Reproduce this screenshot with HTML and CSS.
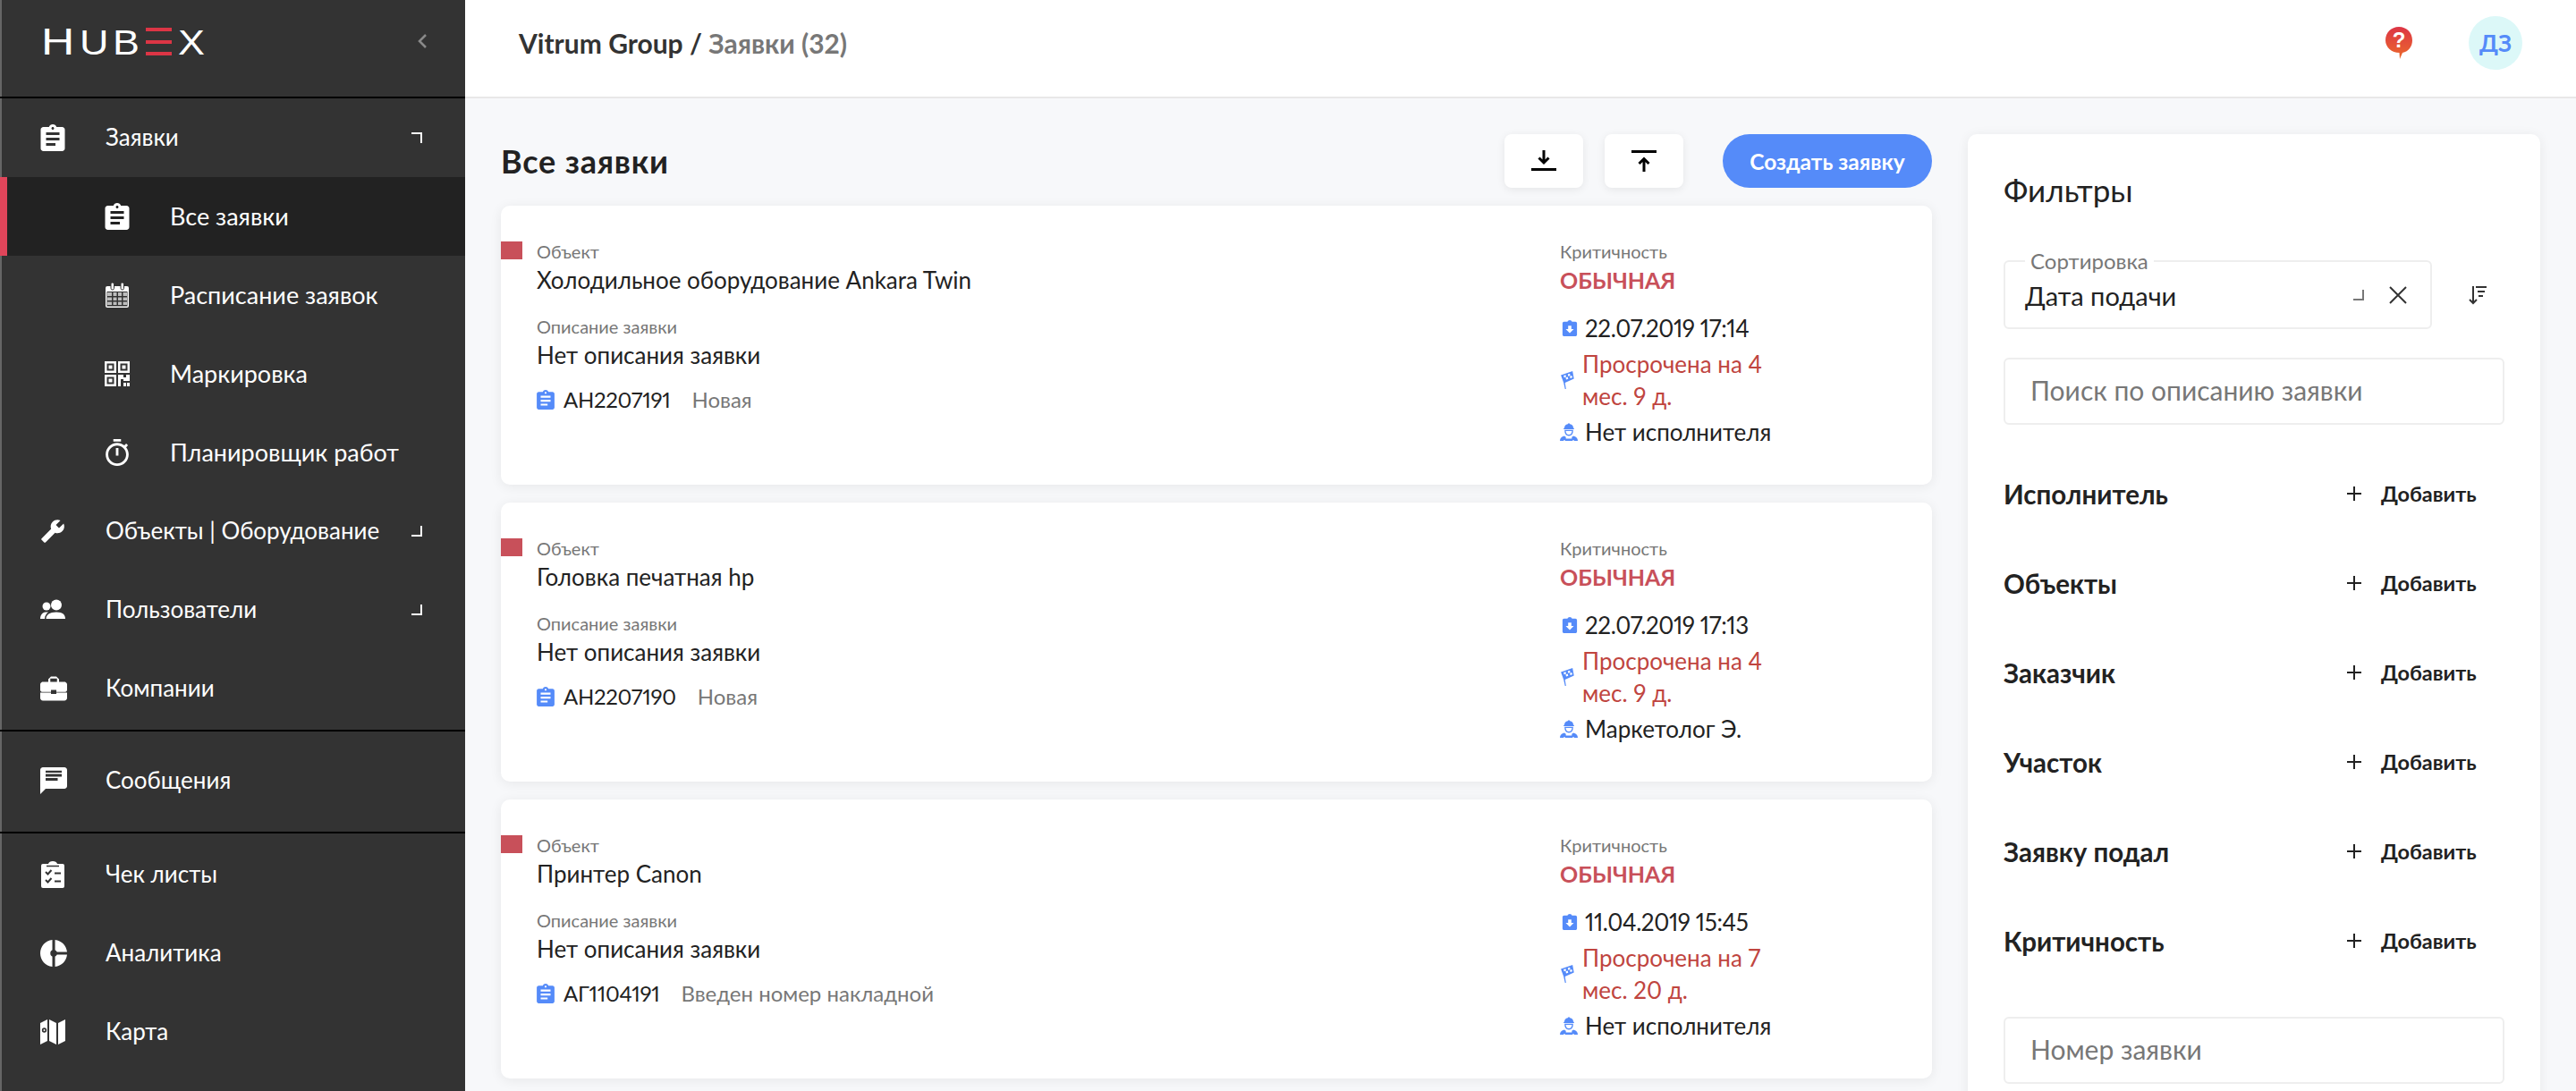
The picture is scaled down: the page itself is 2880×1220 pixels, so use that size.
FILE: index.html
```html
<!DOCTYPE html>
<html lang="ru">
<head>
  <meta charset="UTF-8">
  <title>Все заявки</title>
  <link rel="stylesheet" href="styles.css">
</head>
<body>
  <svg class="icon-defs" xmlns="http://www.w3.org/2000/svg">
    <symbol id="i-assignment" viewBox="3 1 18 20"><path d="M19 3h-4.18C14.4 1.84 13.3 1 12 1c-1.3 0-2.4.84-2.82 2H5c-1.1 0-2 .9-2 2v14c0 1.1.9 2 2 2h14c1.1 0 2-.9 2-2V5c0-1.1-.9-2-2-2zm-7 0c.55 0 1 .45 1 1s-.45 1-1 1-1-.45-1-1 .45-1 1-1zm2 14H7v-2h7v2zm3-4H7v-2h10v2zm0-4H7V7h10v2z"/></symbol>
    <symbol id="i-date" viewBox="3 1 18 20"><path d="M19 3h-4.18C14.4 1.84 13.3 1 12 1c-1.3 0-2.4.84-2.82 2H5c-1.1 0-2 .9-2 2v14c0 1.1.9 2 2 2h14c1.1 0 2-.9 2-2V5c0-1.1-.9-2-2-2zm-7 14l-5-5h3V8h4v4h3l-5 5z"/></symbol>
    <symbol id="i-flag" viewBox="0 0 20 26"><path d="M1 6l17-6 2 11-13 6 1.500 9H7L5 17z"/><path fill="#fff" d="M5 6.500l3-1 .7 3-3 1zM11 4.500l3-1 .7 3-3 1zM8 9.500l3-1 .7 3-3 1zM14 7.500l3-1 .7 3-3 1z"/></symbol>
    <symbol id="i-worker" viewBox="0 0 24 24"><path d="M12 0l1.500 1.500c3 .5 4.500 2.500 4.500 5.500h1v1.500H5V7h1c0-3 1.500-5 4.500-5.500z"/><path d="M7 10h10c0 4-2 6.500-5 6.500S7 14 7 10z" fill="none" stroke="currentColor" stroke-width="1.600"/><path d="M0 24c0-3.500 2-5.500 6-6.500l2 1.500v2h8v-2l2-1.500c4 1 6 3 6 6.500h-5v-1h-2v1H7v-1H5v1z"/></symbol>
  </svg>

  <div class="app">
    <aside class="sidebar">
      <div class="logo-row">
        <div class="logo"><span class="logo-h">H</span><span class="logo-u">U</span><span class="logo-b">B</span><span class="logo-e"><i></i><i></i><i></i></span><span class="logo-x">X</span></div>
        <svg class="collapse" viewBox="0 0 12 18"><path d="M10 2L3 9l7 7" fill="none" stroke="#8a8a8a" stroke-width="2.500"/></svg>
      </div>

      <nav class="nav-group nav-first">
        <a class="nav-item">
          <svg class="nav-icon" viewBox="0 0 28 30"><use href="#i-assignment"/></svg>
          <span>Заявки</span><b class="corner corner-up"></b>
        </a>
        <a class="nav-item nav-sub active">
          <svg class="nav-icon" viewBox="0 0 28 30"><use href="#i-assignment"/></svg>
          <span>Все заявки</span>
        </a>
        <a class="nav-item nav-sub">
          <svg class="nav-icon" viewBox="0 0 28 28">
            <path d="M3 4h22a2 2 0 0 1 2 2v20a2 2 0 0 1-2 2H3a2 2 0 0 1-2-2V6a2 2 0 0 1 2-2z"/>
            <path d="M2.500 10h23v16.500h-23z" fill="#333"/>
            <path d="M3 11h5v4H3zm6.500 0h4v4h-4zm5.500 0h4v4h-4zm5.500 0H25v4h-4.500zM3 16.500h5V20H3zm6.500 0h4V20h-4zm5.500 0h4V20h-4zm5.500 0H25V20h-4.500zM3 21.500h5V25H3zm6.500 0h4V25h-4zm5.500 0h4V25h-4zm5.500 0H25V25h-4.500z" fill="#bdbdbd"/>
            <rect x="7" y="0" width="3.500" height="8" rx="1.700" stroke="#333"/><rect x="18" y="0" width="3.500" height="8" rx="1.700" stroke="#333"/>
          </svg>
          <span>Расписание заявок</span>
        </a>
        <a class="nav-item nav-sub">
          <svg class="nav-icon" viewBox="0 0 28 28">
            <path fill-rule="evenodd" d="M0 0h13v13H0zM2.500 2.500v8h8v-8zM15 0h13v13H15zM17.500 2.500v8h8v-8zM0 15h13v13H0zM2.500 17.500v8h8v-8z"/>
            <path d="M4.500 4.500h4v4h-4zM19.500 4.500h4v4h-4zM4.500 19.500h4v4h-4zM15 15h6v3h3v-3h4v7h-7v-2h-3v8h-3zM21 24h3v4h-3zM25 24h3v4h-3z"/>
          </svg>
          <span>Маркировка</span>
        </a>
        <a class="nav-item nav-sub">
          <svg class="nav-icon" viewBox="3 1 18 21"><path d="M15 1H9v2h6V1zm-4 13h2V8h-2v6zm8.030-6.610l1.420-1.420c-.43-.51-.9-.99-1.410-1.410l-1.420 1.420C16.070 4.740 14.120 4 12 4c-4.970 0-9 4.030-9 9s4.020 9 9 9 9-4.030 9-9c0-2.120-.74-4.070-1.970-5.610zM12 20c-3.870 0-7-3.130-7-7s3.130-7 7-7 7 3.130 7 7-3.130 7-7 7z"/></svg>
          <span>Планировщик работ</span>
        </a>
        <a class="nav-item">
          <svg class="nav-icon" viewBox="0 0 24 24"><path transform="matrix(-1 0 0 1 24 0)" d="M22.700 19l-9.100-9.100c.9-2.300.4-5-1.500-6.900-2-2-5-2.400-7.400-1.300L9 6 6 9 1.600 4.700C.4 7.100.9 10.100 2.900 12.100c1.900 1.900 4.600 2.400 6.900 1.500l9.100 9.100c.4.4 1 .4 1.400 0l2.300-2.300c.5-.4.5-1.100.1-1.400z"/></svg>
          <span>Объекты | Оборудование</span><b class="corner"></b>
        </a>
        <a class="nav-item">
          <svg class="nav-icon" viewBox="0 0 28 24">
            <circle cx="7" cy="8" r="4.500"/><circle cx="18" cy="6.500" r="6"/>
            <path d="M0 22c0-4 2-7 6-7.500h3c-2.500 2-4 4.500-4 7.500zM6.500 22c0-4.500 4-7.500 11.500-7.500S28 17.500 28 22z"/>
          </svg>
          <span>Пользователи</span><b class="corner"></b>
        </a>
        <a class="nav-item">
          <svg class="nav-icon nav-icon-wide" viewBox="2 3 20 18"><path d="M10 16v-1H2.010L2 19c0 1.110.89 2 2 2h16c1.110 0 2-.89 2-2v-4h-8v1h-4zm10-9h-4.010V5l-2-2h-4l-2 2v2H4c-1.100 0-2 .9-2 2v4c0 1.110.89 1.500 2 1.500h6v-1.500h4v1.500h6c1.100 0 2-.39 2-1.500V9c0-1.100-.9-2-2-2zm-5.500 0h-5V4.500h5V7z"/></svg>
          <span>Компании</span>
        </a>
      </nav>

      <nav class="nav-group nav-middle">
        <a class="nav-item">
          <svg class="nav-icon nav-icon-wide" viewBox="2 2 20 20"><path d="M20 2H4c-1.100 0-1.990.9-1.990 2L2 22l4-4h14c1.100 0 2-.9 2-2V4c0-1.100-.9-2-2-2zM15 12H6v-2h9v2zm3-3H6V7h12v2zm0-3H6V4.500h12V6z"/></svg>
          <span>Сообщения</span>
        </a>
      </nav>

      <nav class="nav-group">
        <a class="nav-item">
          <svg class="nav-icon" viewBox="0 0 28 30">
            <path fill-rule="evenodd" d="M3 3h6c.5-2 2.500-3 5-3s4.500 1 5 3h6a2 2 0 0 1 2 2v23a2 2 0 0 1-2 2H3a2 2 0 0 1-2-2V5a2 2 0 0 1 2-2z"/>
            <path d="M7 5.500h14" stroke="#333" stroke-width="1.500"/>
            <path d="M6 12l2.500 2.500L12.500 10M6 21l2.500 2.500L12.500 19M16 13.500h7M16 22.500h7" fill="none" stroke="#333" stroke-width="2"/>
          </svg>
          <span>Чек листы</span>
        </a>
        <a class="nav-item">
          <svg class="nav-icon nav-icon-wide" viewBox="2 2 20 20">
            <path d="M11 2v20c-5.070-.5-9-4.790-9-10s3.930-9.500 9-10zm2.030 0v8.990H22c-.47-4.740-4.240-8.520-8.970-8.990zm0 11.010V22c4.740-.47 8.500-4.250 8.970-8.990h-8.970z"/>
            <circle cx="12" cy="12" r="2.500" fill="#333"/>
          </svg>
          <span>Аналитика</span>
        </a>
        <a class="nav-item">
          <svg class="nav-icon" viewBox="0 0 28 28">
            <path d="M0 4l8-4v24l-8 4zM10 0l8 4v24l-8-4zM20 4l8-4v24l-8 4z"/>
            <circle cx="4.500" cy="12" r="2.700" fill="#333"/><circle cx="4.500" cy="12" r="1" fill="#fff"/>
          </svg>
          <span>Карта</span>
        </a>
      </nav>
    </aside>

    <div class="content">
      <header class="topbar">
        <div class="crumbs">Vitrum Group / <span class="crumb-gray">Заявки (32)</span></div>
        <div class="topbar-right">
          <svg class="help" viewBox="0 0 30 36">
            <defs><linearGradient id="help-fill" x1="0" y1="0" x2="0" y2="1"><stop offset="0" stop-color="#dc3545"/><stop offset="1" stop-color="#ec6a2c"/></linearGradient></defs>
            <path fill="url(#help-fill)" d="M15 0c8.500 0 15 6.500 15 15 0 7-4 12.500-11 14l-3 7-.5-7C7 29 0 23 0 15 0 6.500 6.500 0 15 0z"/>
            <text x="15" y="23" text-anchor="middle" class="help-mark">?</text>
          </svg>
          <div class="avatar">ДЗ</div>
        </div>
      </header>

      <main class="main">
        <section class="requests">
          <div class="requests-head">
            <h1>Все заявки</h1>
            <button class="icon-btn">
              <svg viewBox="0 0 28 24"><path d="M14 0v13M8.500 8.500L14 14l5.500-5.500" fill="none" stroke="#000" stroke-width="3"/><path d="M0 21.500h28" stroke="#000" stroke-width="3"/></svg>
            </button>
            <button class="icon-btn">
              <svg viewBox="0 0 28 24"><path d="M14 24V10M8.500 15L14 9.500l5.500 5.500" fill="none" stroke="#000" stroke-width="3"/><path d="M0 1.500h28" stroke="#000" stroke-width="3"/></svg>
            </button>
            <button class="create-btn">Создать заявку</button>
          </div>

          <article class="card">
            <i class="card-mark"></i>
            <div class="card-left">
              <div class="label">Объект</div>
              <div class="value">Холодильное оборудование Ankara Twin</div>
              <div class="label label-gap">Описание заявки</div>
              <div class="value">Нет описания заявки</div>
              <div class="number-row">
                <svg class="num-icon"><use href="#i-assignment"/></svg>
                <span class="number">АН2207191</span><span class="status">Новая</span>
              </div>
            </div>
            <div class="card-right">
              <div class="label">Критичность</div>
              <div class="crit">ОБЫЧНАЯ</div>
              <div class="info-row"><svg class="date-icon"><use href="#i-date"/></svg><span class="date-text">22.07.2019 17:14</span></div>
              <div class="info-row info-late"><svg class="flag-icon"><use href="#i-flag"/></svg><span>Просрочена на 4 мес. 9 д.</span></div>
              <div class="info-row"><svg class="worker-icon"><use href="#i-worker"/></svg><span>Нет исполнителя</span></div>
            </div>
          </article>

          <article class="card">
            <i class="card-mark"></i>
            <div class="card-left">
              <div class="label">Объект</div>
              <div class="value">Головка печатная hp</div>
              <div class="label label-gap">Описание заявки</div>
              <div class="value">Нет описания заявки</div>
              <div class="number-row">
                <svg class="num-icon"><use href="#i-assignment"/></svg>
                <span class="number">АН2207190</span><span class="status">Новая</span>
              </div>
            </div>
            <div class="card-right">
              <div class="label">Критичность</div>
              <div class="crit">ОБЫЧНАЯ</div>
              <div class="info-row"><svg class="date-icon"><use href="#i-date"/></svg><span class="date-text">22.07.2019 17:13</span></div>
              <div class="info-row info-late"><svg class="flag-icon"><use href="#i-flag"/></svg><span>Просрочена на 4 мес. 9 д.</span></div>
              <div class="info-row"><svg class="worker-icon"><use href="#i-worker"/></svg><span>Маркетолог Э.</span></div>
            </div>
          </article>

          <article class="card">
            <i class="card-mark"></i>
            <div class="card-left">
              <div class="label">Объект</div>
              <div class="value">Принтер Canon</div>
              <div class="label label-gap">Описание заявки</div>
              <div class="value">Нет описания заявки</div>
              <div class="number-row">
                <svg class="num-icon"><use href="#i-assignment"/></svg>
                <span class="number">АГ1104191</span><span class="status">Введен номер накладной</span>
              </div>
            </div>
            <div class="card-right">
              <div class="label">Критичность</div>
              <div class="crit">ОБЫЧНАЯ</div>
              <div class="info-row"><svg class="date-icon"><use href="#i-date"/></svg><span class="date-text">11.04.2019 15:45</span></div>
              <div class="info-row info-late"><svg class="flag-icon"><use href="#i-flag"/></svg><span>Просрочена на 7 мес. 20 д.</span></div>
              <div class="info-row"><svg class="worker-icon"><use href="#i-worker"/></svg><span>Нет исполнителя</span></div>
            </div>
          </article>
        </section>

        <aside class="filters">
          <h2>Фильтры</h2>
          <div class="sort-row">
            <fieldset class="sort-box">
              <legend>Сортировка</legend>
              <span class="sort-value">Дата подачи</span>
              <b class="corner corner-small"></b>
              <svg class="sort-clear" viewBox="0 0 20 20"><path d="M1 1l18 18M19 1L1 19" fill="none" stroke="#333" stroke-width="2"/></svg>
            </fieldset>
            <svg class="sort-dir" viewBox="0 0 20 22">
              <path d="M5 1v19M1 16l4 4 4-4" fill="none" stroke="#333" stroke-width="2"/>
              <path d="M8 2h12M10 7h8M11 12h5" fill="none" stroke="#333" stroke-width="2"/>
            </svg>
          </div>
          <input class="field" type="text" placeholder="Поиск по описанию заявки">

          <div class="filter-rows">
            <div class="filter-row"><strong>Исполнитель</strong><span class="plus"></span><span class="add">Добавить</span></div>
            <div class="filter-row"><strong>Объекты</strong><span class="plus"></span><span class="add">Добавить</span></div>
            <div class="filter-row"><strong>Заказчик</strong><span class="plus"></span><span class="add">Добавить</span></div>
            <div class="filter-row"><strong>Участок</strong><span class="plus"></span><span class="add">Добавить</span></div>
            <div class="filter-row"><strong>Заявку подал</strong><span class="plus"></span><span class="add">Добавить</span></div>
            <div class="filter-row"><strong>Критичность</strong><span class="plus"></span><span class="add">Добавить</span></div>
          </div>
          <input class="field" type="text" placeholder="Номер заявки">
        </aside>
      </main>
    </div>
  </div>
</body>
</html>
```

FILE: styles.css
```css
* {
  box-sizing: border-box;
}

html, body {
  height: 100%;
}

body {
  margin: 0;
  overflow: hidden;
  font-family: "Lato", "Open Sans", sans-serif;
  font-variant-numeric: proportional-nums;
  color: #222;
  background-color: #f7f8fa;
}

.icon-defs {
  display: none;
}

.app {
  display: flex;
  height: 100vh;
}

/* sidebar */

.sidebar {
  flex: 0 0 520px;
  background-color: #333;
  box-shadow: inset 2px 0 0 #666;
  color: #fff;
}

.logo-row {
  display: flex;
  align-items: center;
  justify-content: space-between;
  height: 110px;
  padding: 0 42px 16px 46px;
  border-bottom: 2px solid #000;
}

.logo {
  display: flex;
  align-items: flex-end;
  height: 32px;
  font-family: "Liberation Sans", sans-serif;
  font-size: 39px;
  line-height: 28px;
  color: #fff;
}

.logo span {
  display: block;
  width: 37px;
  transform-origin: left bottom;
  transform: scaleX(1.15);
}

.logo .logo-h {
  width: 43px;
  font-size: 43px;
  line-height: 31px;
  transform: scaleX(1.2);
}

.logo .logo-e {
  display: flex;
  flex-direction: column;
  justify-content: space-between;
  width: 36px;
  height: 31px;
  transform: none;
}

.logo-e i {
  width: 29px;
  height: 4px;
  background-color: #dc3545;
}

.collapse {
  width: 12px;
  height: 18px;
}

.nav-group {
  border-bottom: 2px solid #000;
  padding-top: 0;
}

.nav-first {
  padding-bottom: 2px;
}

.nav-middle {
  padding: 11px 0 13px;
}

.nav-group:last-child {
  border-bottom: 0;
  padding-top: 2px;
}

.nav-item {
  display: flex;
  align-items: center;
  height: 88px;
  padding: 0 48px 0 45px;
  font-size: 26px;
  color: #fff;
}

.nav-item span {
  margin-bottom: 2px;
}

.nav-sub {
  padding-left: 117px;
  font-size: 27px;
}

.nav-item.active {
  background-color: #222;
  box-shadow: inset 8px 0 0 #e0455a;
}

.nav-icon {
  flex: 0 0 28px;
  width: 28px;
  height: 30px;
  margin-right: 45px;
  fill: #fff;
}

.nav-icon-wide {
  flex-basis: 30px;
  width: 30px;
  margin-right: 43px;
}

.corner {
  display: block;
  width: 12px;
  height: 12px;
  margin-left: auto;
  border-right: 2px solid #fff;
  border-bottom: 2px solid #fff;
}

.corner-up {
  border-bottom: 0;
  border-top: 2px solid #fff;
}

/* top bar */

.content {
  flex: 1;
  min-width: 0;
  display: flex;
  flex-direction: column;
}

.topbar {
  flex: 0 0 110px;
  display: flex;
  align-items: center;
  justify-content: space-between;
  padding: 0 60px 12px 60px;
  background-color: #fff;
  border-bottom: 2px solid #e8e8e8;
}

.crumbs {
  font-size: 30px;
  font-weight: 700;
  color: #333;
}

.crumb-gray {
  color: #777;
}

.topbar-right {
  display: flex;
  align-items: center;
  gap: 63px;
}

.help {
  width: 30px;
  height: 36px;
}

.help-mark {
  font-family: "Liberation Sans", sans-serif;
  font-size: 24px;
  font-weight: 700;
  fill: #fff;
}

.avatar {
  display: flex;
  align-items: center;
  justify-content: center;
  width: 60px;
  height: 60px;
  border-radius: 50%;
  background-color: #dcf8f8;
  color: #558bf9;
  font-size: 26px;
  font-weight: 700;
}

/* list */

.main {
  flex: 1;
  min-height: 0;
  overflow: hidden;
  display: flex;
  gap: 40px;
  padding: 40px 40px 0;
}

.requests {
  flex: 0 0 1600px;
}

.requests-head {
  display: flex;
  align-items: center;
  height: 60px;
  margin-bottom: 20px;
}

.requests-head h1 {
  flex: 1;
  margin: 0;
  font-size: 36px;
  font-weight: 700;
  letter-spacing: 0.8px;
  color: #222;
}

.icon-btn {
  display: flex;
  align-items: center;
  justify-content: center;
  width: 88px;
  height: 60px;
  margin-right: 24px;
  padding: 0;
  border: 0;
  border-radius: 8px;
  background-color: #fff;
  box-shadow: 0 2px 10px rgba(0, 0, 0, 0.08);
}

.icon-btn svg {
  width: 28px;
  height: 24px;
}

.icon-btn + .create-btn {
  margin-left: 20px;
}

.create-btn {
  width: 234px;
  height: 60px;
  padding: 0;
  border: 0;
  border-radius: 30px;
  background-color: #558bf9;
  color: #fff;
  font-family: inherit;
  font-size: 24.500px;
  font-weight: 700;
}

.card {
  position: relative;
  display: flex;
  height: 312px;
  margin-bottom: 20px;
  padding: 36px 0 0 40px;
  border-radius: 10px;
  background-color: #fff;
  box-shadow: 0 2px 14px rgba(0, 0, 0, 0.07);
}

.card-mark {
  position: absolute;
  left: 0;
  top: 40px;
  width: 24px;
  height: 20px;
  background-color: #c8505a;
}

.card-left {
  flex: 0 0 1144px;
}

.label {
  font-size: 20px;
  line-height: 30px;
  color: #777;
}

.value {
  font-size: 26px;
  line-height: 34px;
  color: #222;
}

.label-gap {
  margin-top: 20px;
}

.number-row {
  display: flex;
  align-items: center;
  gap: 10px;
  margin-top: 18px;
  font-size: 24px;
  line-height: 30px;
}

.number {
  letter-spacing: -0.3px;
}

.num-icon {
  width: 20px;
  height: 22px;
  fill: #558bf9;
}

.status {
  margin-left: 14px;
  color: #777;
}

.crit {
  margin-bottom: 19px;
  font-size: 25px;
  font-weight: 700;
  line-height: 34px;
  color: #c8505a;
}

.info-row {
  display: flex;
  align-items: center;
  gap: 8px;
  width: 300px;
  margin-bottom: 4px;
  font-size: 26px;
  line-height: 36px;
}

.date-text {
  letter-spacing: -0.4px;
}

.info-late {
  gap: 9px;
  color: #c0453f;
}

.info-late span {
  width: 215px;
}

.date-icon {
  width: 18px;
  height: 18px;
  margin-left: 2px;
  fill: #558bf9;
}

.flag-icon {
  width: 16px;
  height: 20px;
  fill: #558bf9;
}

.worker-icon {
  width: 20px;
  height: 20px;
  color: #558bf9;
  fill: #558bf9;
}

/* filters */

.filters {
  flex: 0 0 640px;
  height: 1200px;
  padding: 40px;
  border-radius: 10px;
  background-color: #fff;
  box-shadow: 0 2px 14px rgba(0, 0, 0, 0.07);
}

.filters h2 {
  margin: 0 0 58px;
  font-size: 35px;
  font-weight: 400;
  line-height: 44px;
  color: #222;
}

.sort-row {
  display: flex;
  align-items: center;
  margin-bottom: 32px;
}

.sort-box {
  display: flex;
  align-items: center;
  width: 479px;
  height: 88px;
  margin: -12px 0 0;
  padding: 0 26px 10px 22px;
  border: 2px solid #eee;
  border-radius: 6px;
}

.sort-box legend {
  margin-left: 0;
  padding: 0 6px;
  font-size: 24px;
  line-height: 24px;
  color: #777;
}

.sort-value {
  flex: 1;
  font-size: 29px;
  color: #222;
}

.corner-small {
  width: 12px;
  height: 12px;
  margin: 0 28px 0 0;
  border-color: #777;
}

.sort-clear {
  width: 20px;
  height: 20px;
}

.sort-dir {
  width: 20px;
  height: 22px;
  margin: 0 0 0 41px;
}

.field {
  display: block;
  width: 560px;
  height: 75px;
  padding: 0 28px 3px;
  border: 2px solid #eee;
  border-radius: 6px;
  background-color: #fff;
  font-family: inherit;
  font-size: 30px;
  outline: none;
}

.field::placeholder {
  color: #777;
  opacity: 1;
}

.filter-rows {
  margin: 27px 0 35px;
}

.filter-row {
  display: flex;
  align-items: center;
  height: 100px;
  font-size: 29.500px;
}

.filter-row strong {
  flex: 1;
  font-weight: 700;
  color: #222;
}

.plus {
  width: 16px;
  height: 16px;
  margin-right: 22px;
  background:
    linear-gradient(#222, #222) center / 100% 2px no-repeat,
    linear-gradient(#222, #222) center / 2px 100% no-repeat;
}

.add {
  width: 138px;
  font-size: 23.500px;
  font-weight: 700;
  color: #222;
}
```
